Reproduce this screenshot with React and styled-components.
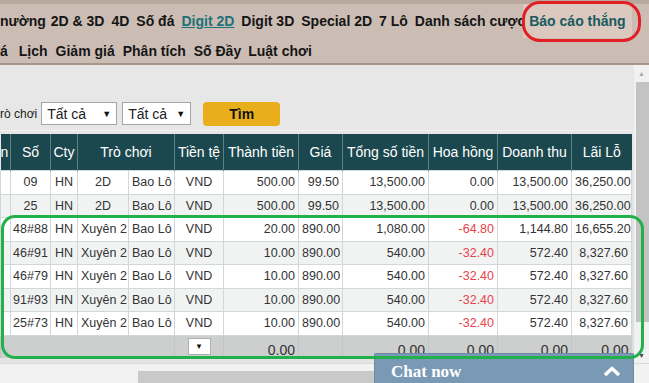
import React from "react";
import styled, { createGlobalStyle } from "styled-components";

const GlobalStyle = createGlobalStyle`
  html, body {
    margin: 0;
    padding: 0;
  }
  body {
    font-family: "Liberation Sans", Arial, sans-serif;
    background: #e7e7e7;
    overflow: hidden;
  }
`;

const topMenu = [
  { label: "nường", gap: -2 },
  { label: "2D & 3D" },
  { label: "4D" },
  { label: "Số đá" },
  { label: "Digit 2D", link: true },
  { label: "Digit 3D" },
  { label: "Special 2D" },
  { label: "7 Lô" },
  { label: "Danh sách cược" },
];

const subMenu = [
  { label: "á", gap: 4 },
  { label: "Lịch", gap: 1 },
  { label: "Giảm giá", gap: 1 },
  { label: "Phân tích", gap: 1 },
  { label: "Số Đầy" },
  { label: "Luật chơi" },
];

const cols = [10, 40, 27, 51, 46, 49, 75, 44, 86, 69, 74, 60];

const mk = (so, game, amount, price, total, comm, rev, pl) => ({
  so, cty: "HN", game, type: "Bao Lô", cur: "VND", amount, price, total, comm, rev, pl,
});

const rows = [
  mk("09", "2D", "500.00", "99.50", "13,500.00", "0.00", "13,500.00", "36,250.00"),
  mk("25", "2D", "500.00", "99.50", "13,500.00", "0.00", "13,500.00", "36,250.00"),
  mk("48#88", "Xuyên 2", "20.00", "890.00", "1,080.00", "-64.80", "1,144.80", "16,655.20"),
  mk("46#91", "Xuyên 2", "10.00", "890.00", "540.00", "-32.40", "572.40", "8,327.60"),
  mk("46#79", "Xuyên 2", "10.00", "890.00", "540.00", "-32.40", "572.40", "8,327.60"),
  mk("91#93", "Xuyên 2", "10.00", "890.00", "540.00", "-32.40", "572.40", "8,327.60"),
  mk("25#73", "Xuyên 2", "10.00", "890.00", "540.00", "-32.40", "572.40", "8,327.60"),
];

const App = () => {
  return (
    <Page>
      <GlobalStyle />
      <Nav>
        <NavRow $h={34}>
          {topMenu.map((m) => (
            <NavItem key={m.label} $link={m.link} $gap={m.gap}>{m.label}</NavItem>
          ))}
          <ActiveItem>Báo cáo thắng</ActiveItem>
        </NavRow>
        <NavRow $h={25}>
          {subMenu.map((m) => (
            <NavItem key={m.label} $gap={m.gap}>{m.label}</NavItem>
          ))}
        </NavRow>
      </Nav>

      <Main>
        <Content>
          <FilterBar>
            <Label>rò chơi</Label>
            <Select $w={76}>
              <span>Tất cả</span>
              <Caret>▼</Caret>
            </Select>
            <Select $w={69}>
              <span>Tất cả</span>
              <Caret>▼</Caret>
            </Select>
            <SearchButton>Tìm</SearchButton>
          </FilterBar>

          <TableWrap>
            <Table>
              <colgroup>
                {cols.map((w, i) => (
                  <col key={i} style={{ width: w }} />
                ))}
              </colgroup>
              <thead>
                <tr>
                  <Th $align="right">n</Th>
                  <Th>Số</Th>
                  <Th>Cty</Th>
                  <Th colSpan={2}>Trò chơi</Th>
                  <Th>Tiền tệ</Th>
                  <Th>Thành tiền</Th>
                  <Th>Giá</Th>
                  <Th>Tổng số tiền</Th>
                  <Th>Hoa hồng</Th>
                  <Th>Doanh thu</Th>
                  <Th>Lãi Lỗ</Th>
                </tr>
              </thead>
              <tbody>
                {rows.map((r, i) => (
                  <Row key={i} $alt={i % 2 === 1}>
                    <Td />
                    <Td $align="center">{r.so}</Td>
                    <Td $align="center">{r.cty}</Td>
                    <Td $align="center">{r.game}</Td>
                    <Td $align="center">{r.type}</Td>
                    <Td $align="center">{r.cur}</Td>
                    <Td>{r.amount}</Td>
                    <Td>{r.price}</Td>
                    <Td>{r.total}</Td>
                    <Td $neg={r.comm.startsWith("-")}>{r.comm}</Td>
                    <Td>{r.rev}</Td>
                    <Td>{r.pl}</Td>
                  </Row>
                ))}
                <FootRow>
                  <Ft colSpan={5} />
                  <Ft $align="center">
                    <MiniSelect>▼</MiniSelect>
                  </Ft>
                  <Ft>0.00</Ft>
                  <Ft />
                  <Ft>0.00</Ft>
                  <Ft>0.00</Ft>
                  <Ft>0.00</Ft>
                  <Ft>0.00</Ft>
                </FootRow>
              </tbody>
            </Table>
          </TableWrap>
        </Content>

        <VScroll>
          <ArrowBtn $color="#a8a8a8">▲</ArrowBtn>
          <VThumb />
          <Spacer />
          <ArrowBtn $color="#4a4a4a">▼</ArrowBtn>
        </VScroll>
      </Main>

      <HScroll>
        <HThumb />
      </HScroll>

      <ChatBox>
        <ChatTitle>Chat now</ChatTitle>
        <svg width="18" height="11" viewBox="0 0 18 11">
          <polyline
            points="2,9 9,2.5 16,9"
            fill="none"
            stroke="#ffffff"
            strokeWidth="3.6"
            strokeLinejoin="round"
          />
        </svg>
      </ChatBox>

      <RedMark />
      <GreenMark />
    </Page>
  );
};

const Page = styled.div`
  position: relative;
  width: 649px;
  height: 383px;
  overflow: hidden;
  background: #e7e7e7;
`;

const Nav = styled.div`
  background: #ccbdb4;
  border-top: 4px solid #b9a89d;
  border-bottom: 2px solid #a8968b;
  box-shadow: 0 1px 0 #f1ece9;
`;

const NavRow = styled.div`
  display: flex;
  align-items: center;
  gap: 7px;
  height: ${(p) => p.$h}px;
  white-space: nowrap;
`;

const NavItem = styled.span`
  margin-right: ${(p) => p.$gap || 0}px;
  font-size: 14px;
  font-weight: bold;
  color: ${(p) => (p.$link ? "#1d7178" : "#151515")};
  text-decoration: ${(p) => (p.$link ? "underline" : "none")};
`;

const ActiveItem = styled.span`
  position: relative;
  display: flex;
  align-items: center;
  align-self: stretch;
  margin-left: -9px;
  padding: 0 6px;
  background: #dbc8be;
  font-size: 14px;
  font-weight: bold;
  color: #175a60;
`;

const Main = styled.div`
  display: flex;
  height: 298px;
`;

const Content = styled.div`
  width: 634px;
  display: flex;
  flex-direction: column;
  background: #e4e4e4;
`;

const FilterBar = styled.div`
  display: flex;
  align-items: center;
  height: 33px;
  padding-top: 32px;
  background: #e7e7e7;
`;

const Label = styled.span`
  font-size: 12px;
  color: #222;
  margin-right: 4px;
`;

const Select = styled.div`
  box-sizing: border-box;
  display: flex;
  align-items: center;
  justify-content: space-between;
  width: ${(p) => p.$w}px;
  height: 23px;
  margin-right: 5px;
  padding: 0 5px 0 5px;
  background: #fff;
  border: 1px solid #a6a6a6;
  font-size: 14px;
  color: #222;
`;

const Caret = styled.span`
  font-size: 9px;
  color: #111;
`;

const SearchButton = styled.button`
  width: 77px;
  height: 24px;
  margin-left: 7px;
  border: none;
  border-radius: 4px;
  background: #e9ae1b;
  font-family: "Liberation Sans", Arial, sans-serif;
  font-size: 14px;
  font-weight: bold;
  color: #111;
  cursor: pointer;
`;

const TableWrap = styled.div`
  border-top: 1px solid #f4f2f1;
  padding-top: 3px;
  background: linear-gradient(#e7e7e7, #d7e0dd);
`;

const Table = styled.table`
  table-layout: fixed;
  border-collapse: collapse;
  width: 631px;
  font-family: "Liberation Sans", Arial, sans-serif;
`;

const Th = styled.th`
  height: 36px;
  padding: 0;
  background: #1b484e;
  border-left: 1px solid #5f7f82;
  color: #fff;
  font-size: 14px;
  font-weight: normal;
  white-space: nowrap;
  overflow: hidden;
  text-align: ${(p) => p.$align || "center"};
  padding-right: ${(p) => (p.$align === "right" ? "2px" : "0")};
  &:first-child {
    border-left: none;
  }
`;

const Row = styled.tr`
  height: 23.5px;
  background: ${(p) => (p.$alt ? "#f1f3f3" : "#ffffff")};
`;

const Td = styled.td`
  padding: 0 3px;
  border: 1px solid #d2d8d8;
  font-size: 12.5px;
  color: ${(p) => (p.$neg ? "#e8434c" : "#333")};
  text-align: ${(p) => p.$align || "right"};
  white-space: nowrap;
  overflow: hidden;
  &:nth-child(2) {
    padding: 0 1px;
  }
`;

const FootRow = styled.tr`
  height: 22.5px;
  background: #cdcfcf;
`;

const Ft = styled.td`
  padding: 0 3px;
  border-left: 1px solid #c3c6c6;
  font-size: 14px;
  color: #333;
  text-align: ${(p) => p.$align || "right"};
  vertical-align: bottom;
`;

const MiniSelect = styled.div`
  box-sizing: border-box;
  display: inline-flex;
  align-items: center;
  justify-content: center;
  width: 23px;
  height: 17px;
  margin-bottom: 3px;
  background: #fff;
  border: 1px solid #b0b0b0;
  font-size: 8px;
  color: #111;
`;

const VScroll = styled.div`
  width: 15px;
  display: flex;
  flex-direction: column;
  background: #f1f1f1;
`;

const ArrowBtn = styled.div`
  height: 16px;
  display: flex;
  align-items: center;
  justify-content: center;
  font-size: 7px;
  color: ${(p) => p.$color};
`;

const VThumb = styled.div`
  height: 240px;
  margin: 1px 0 0 2px;
  background: #c3c3c3;
`;

const Spacer = styled.div`
  flex: 1;
`;

const HScroll = styled.div`
  box-sizing: border-box;
  height: 20px;
  padding-top: 7px;
  background: #f2f2f2;
  border-top: 1px solid #dadada;
`;

const HThumb = styled.div`
  width: 240px;
  height: 13px;
  margin-left: 138px;
  background: #c9c9c9;
`;

const ChatBox = styled.div`
  position: absolute;
  right: 15px;
  bottom: 0;
  box-sizing: border-box;
  width: 260px;
  height: 30px;
  display: flex;
  align-items: center;
  justify-content: space-between;
  padding: 6px 12px 0 16px;
  background: #7a99b5;
  border: 1px solid #6d8ba6;
  border-bottom: none;
  border-radius: 2px 2px 0 0;
`;

const ChatTitle = styled.span`
  font-family: "Liberation Serif", "Times New Roman", serif;
  font-size: 17px;
  font-weight: bold;
  color: #fff;
`;

const RedMark = styled.div`
  position: absolute;
  left: 522px;
  top: 1px;
  width: 119px;
  height: 41px;
  box-sizing: border-box;
  border: 3.5px solid #e31f26;
  border-radius: 18px;
  pointer-events: none;
`;

const GreenMark = styled.div`
  position: absolute;
  left: 1px;
  top: 215px;
  width: 643px;
  height: 144px;
  box-sizing: border-box;
  border: 3.5px solid #22b04b;
  border-radius: 14px;
  pointer-events: none;
`;

export default App;
